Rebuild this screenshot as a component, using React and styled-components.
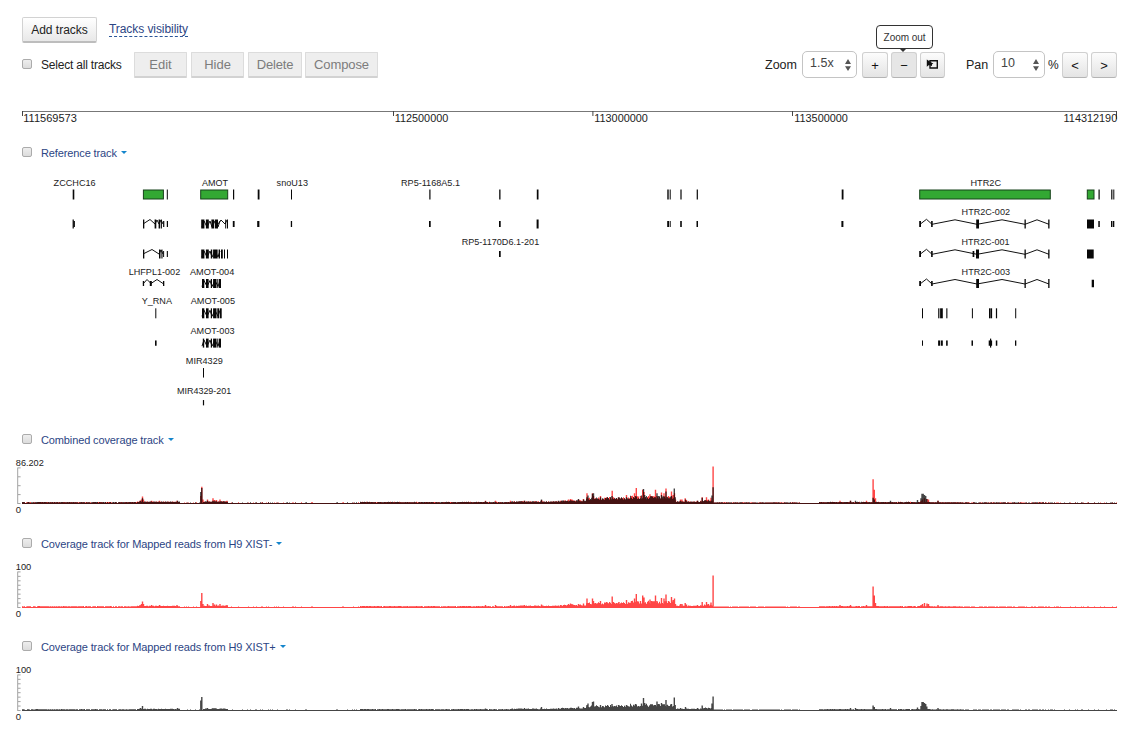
import React from "react";
import styled, { createGlobalStyle, css } from "styled-components";

const GlobalStyle = createGlobalStyle`
  body { margin: 0; background: #fff; overflow: hidden; }
  * { box-sizing: border-box; }
`;

const Page = styled.main`
  width: 1134px;
  height: 736px;
  display: flex;
  flex-direction: column;
  overflow: hidden;
  font-family: "Liberation Sans", Arial, sans-serif;
  font-size: 12px;
  color: #222;
`;

const Toolbar = styled.header`
  height: 100px;
  flex: none;
  padding: 17px 17px 0 22px;
  display: flex;
  justify-content: space-between;
`;

const Left = styled.div`
  display: flex;
  flex-direction: column;
  gap: 9px;
`;

const Row = styled.div`
  display: flex;
  align-items: center;
  height: 26px;
  white-space: nowrap;
`;

const Right = styled(Row)`
  margin-top: 34px;
  height: 27px;
`;

const Button = styled.button`
  width: ${(p) => p.$w}px;
  height: 26px;
  padding: 0;
  margin-right: ${(p) => p.$gap ?? 4}px;
  font: ${(p) => p.$size ?? 13}px "Liberation Sans", Arial, sans-serif;
  letter-spacing: ${(p) => p.$ls ?? 0}px;
  white-space: nowrap;
  color: #222;
  border: 1px solid #d2d2d2;
  border-bottom: 2px solid #bdbdbd;
  border-radius: 2px;
  background: linear-gradient(#fff, #e8e8e8);
  ${(p) => p.disabled && css`
    color: #7c7c7c;
    background: #eee;
    border: 1px solid #dcdcdc;
    border-bottom: 2px solid #d2d2d2;
    border-radius: 1px;
  `}
`;

const SquareButton = styled(Button)`
  position: relative;
  display: flex;
  align-items: center;
  justify-content: center;
  padding: 1px 0 0;
  color: #111;
  border-color: #d0d0d0;
  border-bottom: 1px solid #b4b4b4;
  border-radius: 3px;
  background: ${(p) => (p.$active ? "#e6e6e6" : "linear-gradient(#fcfcfc, #e4e4e4)")};
`;

const Link = styled.a`
  margin-left: 8px;
  height: 15px;
  margin-top: -1px;
  line-height: 14px;
  color: #2c4584;
  letter-spacing: -0.07px;
  border-bottom: 1px dashed #2a5599;
`;

const Check = styled.input`
  appearance: none;
  width: 10px;
  height: 10px;
  margin: 0 9px 2px 0;
  flex: none;
  border: 1px solid #ababab;
  border-radius: 2px;
  background: linear-gradient(#eee, #dcdcdc);
`;

const Text = styled.span`
  width: ${(p) => p.$w}px;
  font-size: ${(p) => p.$size ?? 12}px;
  letter-spacing: ${(p) => p.$ls ?? 0}px;
`;

const Select = styled.div`
  width: ${(p) => p.$w}px;
  height: 27px;
  margin-right: ${(p) => p.$gap}px;
  padding: 0 5px 0 7px;
  display: flex;
  align-items: center;
  justify-content: space-between;
  font-size: 12.5px;
  line-height: 1;
  color: #444;
  border: 1px solid #c4c4c4;
  border-radius: 5px;
`;

const Value = styled.span`
  margin-top: -3px;
`;

const Tooltip = styled.div`
  position: absolute;
  left: -16px;
  top: -28px;
  width: 57px;
  height: 24px;
  display: flex;
  align-items: center;
  justify-content: center;
  padding-top: 1px;
  font-size: 10px;
  letter-spacing: -0.05px;
  color: #333;
  background: #fff;
  border: 1px solid #333;
  border-radius: 4px;
  &::after {
    content: "";
    position: absolute;
    top: 22px;
    left: 22px;
    border: 4px solid transparent;
    border-top-color: #333;
    border-bottom: 0;
  }
`;

const TrackHeader = styled.div`
  display: flex;
  align-items: center;
  flex: none;
  height: 26px;
  margin-top: ${(p) => p.$top ?? 0}px;
  padding-left: 22px;
  font-size: 11px;
  color: #2c4584;
  letter-spacing: -0.12px;
`;

const Caret = styled.i`
  margin: -2px 0 0 4px;
  border: 3px solid transparent;
  border-top-color: #1485cc;
  border-bottom: 0;
`;

const Chart = styled.svg`
  display: block;
  flex: none;
  font-family: "Liberation Sans", Arial, sans-serif;
`;

const Canvas = ({ top, height, children }) => (
  <Chart width="1134" height={height} viewBox={`0 ${top} 1134 ${height}`}>{children}</Chart>
);

const Arrows = () => (
  <svg width="6" height="12" viewBox="0 0 6 12"><path d="M0 5 3 0 6 5zM0 7.2H6L3 12z" fill="#555" /></svg>
);

const SelectRegionIcon = () => (
  <svg width="13" height="12" viewBox="0 0 13 12">
    <path d="M4 1.8h7.3v7.2H4z" fill="none" stroke="#111" strokeWidth="1.4" />
    <path d="M.8.4v7.4L3 6l3 .9V5.2l1.4-.5z" fill="#111" />
  </svg>
);

const Label = ({ x, y, w, children, size = 9, fill = "#222" }) => (
  <text x={x} y={y} fontSize={size} textLength={w} lengthAdjust="spacingAndGlyphs" fill={fill}>{children}</text>
);

/* Coordinate ruler */
const Ruler = () => (
  <Canvas top={100} height={40}>
    <path d="M22 111.5H1117" stroke="#777" fill="none" />
    <path d="M22.5 111v5M393.5 111v5M592.9 111v5M792.5 111v5M1116.5 111v8" stroke="#444" fill="none" />
    {[[23.3, "111569573"], [394.7, "112500000"], [594.3, "113000000"], [794.3, "113500000"], [1063.6, "114312190"]].map(([x, t]) => (
      <Label key={t} x={x} y={122} w={53.6} size={10.7}>{t}</Label>
    ))}
  </Canvas>
);

/* Gene labels: x, baseline, width, name */
const geneLabels = [
  [53.6, 185.5, 42, "ZCCHC16"], [202, 185.5, 26, "AMOT"], [276.6, 185.5, 31.4, "snoU13"],
  [401, 185.5, 59, "RP5-1168A5.1"], [970.5, 185.5, 30.5, "HTR2C"], [961.6, 215.2, 48.4, "HTR2C-002"],
  [461.7, 244.8, 77.5, "RP5-1170D6.1-201"], [961.6, 244.8, 48, "HTR2C-001"],
  [128.7, 274.6, 51.5, "LHFPL1-002"], [190, 274.6, 44.3, "AMOT-004"], [961.6, 274.6, 48.4, "HTR2C-003"],
  [141.7, 304.3, 30.3, "Y_RNA"], [190.7, 304.3, 44.3, "AMOT-005"], [190.5, 334, 44, "AMOT-003"],
  [185.8, 363.8, 37, "MIR4329"], [177, 393.6, 54.3, "MIR4329-201"],
];

const genes = [[143.4, 20], [200.7, 27], [919.7, 130.6], [1087.3, 6.7]];

/* Marks: vertical centre, height, then [x, width] pairs */
const marks = [
  [194.5, 10, [[72.7, 1.6], [166.8, 1], [233, 1.2], [257.7, 1.8], [291, 1], [429.3, 1.2], [499.2, 1.3], [536.8, 1.7], [667.3, 1.4], [669.7, 1], [680.4, 1.2], [696.7, 1.2], [841.7, 1.8], [1098.5, 1.2], [1111.2, 1.2], [1113.3, 1]]],
  [224, 6, [[73.4, 1.5], [166.8, 1.2], [232.8, 1.8], [257.2, 2.2], [290.8, 1.3], [429, 1.7], [499, 1.7], [667.2, 1.8], [669.7, 1], [680.2, 1.6], [696.5, 1.5], [841.4, 2], [1098.3, 1.5], [1111, 1.3], [1112.8, 1.5], [163.1, 1.2], [919.2, 1.8], [931.1, 1.6]]],
  [224, 9, [[72.6, 1.2], [536.6, 2], [143, 1.3], [154.6, 1.7], [158.6, 1.4], [160.7, 1.2], [201.2, 3.2], [205.9, 2.9], [211.4, 2.8], [215, 3], [225.2, 1], [227, 1], [976.2, 2.8], [1024.5, 1.3], [1048.2, 1.3], [1087, 7]]],
  [254, 6, [[163.1, 1], [166.8, 1.1], [499, 1.7], [919.2, 1.8], [931.1, 1.6], [972.6, 1.7]]],
  [254, 9, [[143, 1.3], [159, 1.5], [161.4, 1.1], [201.2, 3.2], [205.9, 2.9], [210.8, 1.4], [213.1, 4.5], [218.6, 1.4], [221, 1.8], [224, 1], [227, 1], [976, 3], [1024.5, 1.3], [1048.2, 1.3], [1087, 6.7]]],
  [283.5, 5, [[142.8, 1.3], [149.8, 2], [163, 1.3], [919.2, 1.8], [931.1, 1.6]]],
  [283.5, 9, [[202, 2.3], [206, 2.6], [210.8, 1.2], [213.1, 3.4], [217.3, 1], [219, 2], [976.2, 2.8], [1024.5, 1.3], [1048.2, 1.3]]],
  [283.5, 7.5, [[1091.7, 2.3]]],
  [313.3, 10, [[155.3, 1], [202, 2.3], [206, 2.6], [210.8, 1.2], [213.1, 3.4], [217.3, 2], [220, 1.7], [922, 1], [938.2, 1.2], [940.1, 2.7], [946.3, 1.1], [971.9, 1], [989, 1], [990.3, 1.8], [995.9, 1.2], [1015.2, 1]]],
  [343.1, 5.3, [[155, 1.6], [922, 1], [938.1, 2], [940.8, 2], [946.1, 1.6], [971.5, 1.5], [988.7, 3.4], [995.8, 1.5], [1015, 1.3]]],
  [343.1, 9, [[202.8, 1.4], [206, 2.6], [210.8, 1.2], [213.1, 3.4], [217.3, 1], [219, 2], [990, 1.2]]],
  [372.8, 9.5, [[203, 1]]],
  [402.7, 5.3, [[202.9, 1.2]]],
];

const receptorIntrons = (y) => `M920 ${y}L926.5 ${y - 5}L932 ${y}L955 ${y - 4.5}L977 ${y}L1002 ${y - 4.5}L1025 ${y}L1037 ${y - 4.5}L1049 ${y}`;
const amotIntrons = (y) => `M202 ${y + 3}l2-6 3 6 3-6 2 6 3-6 3 6 2-6`;

const ReferenceTrack = () => (
  <Canvas top={166} height={248}>
    {geneLabels.map(([x, y, w, t]) => <Label key={t} x={x} y={y} w={w}>{t}</Label>)}
    {genes.map(([x, w]) => <rect key={x} x={x} y="190" width={w} height="9" fill="#33a833" stroke="#17421b" />)}
    <g stroke="#111" strokeWidth="1" fill="none">
      {[224.3, 254.3, 284].map((y) => <path key={y} d={receptorIntrons(y)} />)}
      {[224, 254, 283.5, 313.3, 343.1].map((y) => <path key={y} d={amotIntrons(y)} />)}
      <path d="M143 224l7-4.5 5 4.5 2-4 2 4 2-4 2 4M143 254l9-4.5 7 4.5 2-4 2 4M143 284l4-4.5 4 4 6-4 6 4M218 224l3-4 4 4 2-4" />
    </g>
    {marks.map(([c, h, items], i) => items.map(([x, w]) => (
      <rect key={`${i}-${x}`} x={x} y={c - h / 2} width={w} height={h} fill="#080808" />
    )))}
  </Canvas>
);

/* Peaks of each sample as [x, height] on the 0-100 scale (32px) */
const minusPeaks = [
  [139.5, 2], [141, 3], [142, 5.5], [143, 3], [151, 2], [159, 2], [176.5, 2], [200.3, 6], [201.3, 14], [202.5, 3],
  [207, 3], [212.5, 4], [214, 2.5], [216, 2.5], [219.5, 3], [226.5, 2], [485, 2], [495, 2], [510, 2], [524, 2], [541, 2.5],
  [560, 2], [565, 2], [568, 3], [570, 3.5], [571.5, 3], [578, 3], [583, 3.5],
  [586.5, 8.5], [588, 4], [592, 8.5], [593, 6], [600, 6], [606, 5], [611.7, 10.5], [613, 5], [618.5, 5], [626, 7],
  [631, 6], [634, 8.5], [635.8, 13], [640, 6], [642.2, 11.5], [643.5, 9.5], [649.5, 7.5], [651, 6], [655, 11.5], [656.5, 6],
  [661, 9], [663.5, 8.5], [665.5, 12.5], [668, 6], [671, 10], [672.7, 7], [674, 8.5], [675, 3], [680, 3], [681.5, 3],
  [684.7, 4], [686, 2.5], [697, 2], [701.7, 5], [706, 5], [708, 3], [710.5, 4.5], [712.6, 31.5],
  [839.5, 2], [850, 2], [866, 2], [872.6, 20.5], [873.8, 11.5], [875, 4], [920.5, 2], [922, 3], [924, 4], [926.5, 3.5], [928, 3], [937.5, 2],
];
const plusPeaks = [
  [140, 2], [142, 4], [177, 2], [200.3, 9.5], [201.3, 13], [207, 2], [212.5, 2], [214.5, 2], [485, 1.5], [524, 2], [541, 3],
  [558, 2], [565, 2], [578, 3.5], [583, 3], [586.5, 5], [587.5, 6.5], [592, 8], [593, 8.5], [596, 4], [600, 5], [606, 4],
  [611.5, 6], [614, 4], [618, 5], [626, 5], [630, 4], [635, 6], [638, 4], [641, 6.5], [643, 12], [644.2, 7],
  [650, 5], [654, 5], [656.5, 8.5], [658, 6], [661, 7], [665.5, 10], [667, 5], [671, 6], [673.8, 12.5], [674.7, 5],
  [680, 2], [685, 3], [697, 2], [701.7, 4.5], [706, 2], [709, 2], [711.5, 6.5], [712.6, 13.5],
  [850, 2], [855, 2], [872.6, 4.5], [873.8, 3], [890, 2], [917, 2.5], [920.5, 4], [921.5, 8], [922.7, 8],
  [924, 7], [925.2, 6], [926.3, 3.5], [937.5, 2],
];

/* Background read depth: from, to, floor, spread, fraction of covered positions */
const depth = [
  [22, 137, 0.5, 0.4, 0.9], [137, 180, 0.8, 0.5, 1], [184, 200, 0.4, 0.2, 0.3], [203, 228, 0.9, 0.6, 1], [228, 360, 0.4, 0.2, 0.3],
  [360, 510, 0.6, 0.4, 0.95], [510, 560, 0.8, 0.8, 1], [560, 586, 1.2, 1.2, 1], [586, 604, 2.6, 2.1, 1],
  [604, 630, 2.8, 2.6, 1], [630, 675, 3.2, 3.2, 1], [675, 700, 0.8, 0.8, 1], [700, 713, 1.3, 1.2, 1], [713, 800, 0.4, 0.2, 0.85],
  [819, 930, 0.6, 0.4, 0.95], [930, 962, 0.5, 0.2, 1], [962, 1050, 0.4, 0.2, 0.6], [1050, 1117, 0.4, 0.1, 0.3],
];
const noise = (n) => {
  const v = Math.sin(n * 12.9898) * 43758.5453;
  return v - Math.floor(v);
};

const buildPath = (peaks, base, scale, seed) => {
  let d = `M22 ${base}H1117v1H22z`;
  depth.forEach(([from, to, floor, spread, fill]) => {
    for (let x = from; x < to; x += 1) {
      if (noise(x + seed) < fill) {
        const h = ((floor + spread * noise(x * 3 + seed)) * scale).toFixed(2);
        d += `M${x} ${base}v-${h}h1v${h}z`;
      }
    }
  });
  peaks.forEach(([x, height]) => {
    const h = (height * scale).toFixed(2);
    d += `M${x - 0.2} ${base}v-${h}h1.4v${h}z`;
  });
  return d;
};

const Coverage = ({ top, base, max, step, minus, plus }) => {
  const scale = minus && plus ? 1.16 : 1;
  const ticks = [];
  for (let y = base + 0.5; y > base - 37; y -= step) ticks.push(`M18 ${y}h2.6`);
  return (
    <Canvas top={top} height={74}>
      <path d={`M17.7 ${base - 35.5}V${base + 1}${ticks.join("")}`} stroke="#999" fill="none" strokeWidth=".9" />
      {minus && <path d={buildPath(minusPeaks, base, scale, 5)} fill="#f00" fillOpacity=".73" />}
      {plus && <path d={buildPath(plusPeaks, base, scale, 11)} fill="#000" fillOpacity=".73" />}
      <Label x={15.8} y={base - 37} w={max.length > 3 ? 28 : 15.5}>{max}</Label>
      <Label x={15.8} y={base + 9.7} w={5.3}>0</Label>
    </Canvas>
  );
};

const Track = ({ name, top, children }) => (
  <>
    <TrackHeader $top={top}><Check type="checkbox" />{name}<Caret /></TrackHeader>
    {children}
  </>
);

export default function App() {
  return (
    <Page>
      <GlobalStyle />
      <Toolbar>
        <Left>
          <Row>
            <Button $w={75} $size={12}>Add tracks</Button>
            <Link>Tracks visibility</Link>
          </Row>
          <Row>
            <Check type="checkbox" />
            <Text $w={93} $ls={-0.2}>Select all tracks</Text>
            <Button disabled $w={53}>Edit</Button>
            <Button disabled $w={53}>Hide</Button>
            <Button disabled $w={54} $gap={3} $ls={-0.15}>Delete</Button>
            <Button disabled $w={73} $ls={-0.1}>Compose</Button>
          </Row>
        </Left>
        <Right>
          <Text $w={37} $size={12.5}>Zoom</Text>
          <Select $w={55} $gap={5}><Value>1.5x</Value><Arrows /></Select>
          <SquareButton $w={26} $gap={3}>+</SquareButton>
          <SquareButton $w={26} $gap={3} $active>−<Tooltip>Zoom out</Tooltip></SquareButton>
          <SquareButton $w={25} $gap={21}><SelectRegionIcon /></SquareButton>
          <Text $w={27} $size={12.5}>Pan</Text>
          <Select $w={52} $gap={3}><Value>10</Value><Arrows /></Select>
          <Text $w={14}>%</Text>
          <SquareButton $w={26} $gap={3}>&lt;</SquareButton>
          <SquareButton $w={26} $gap={0}>&gt;</SquareButton>
        </Right>
      </Toolbar>
      <Ruler />
      <Track name="Reference track"><ReferenceTrack /></Track>
      <Track name="Combined coverage track" top={13}>
        <Coverage top={453} base={503} max="86.202" step={8.9} minus plus />
      </Track>
      <Track name="Coverage track for Mapped reads from H9 XIST-" top={4}>
        <Coverage top={557} base={607} max="100" step={4.45} minus />
      </Track>
      <Track name="Coverage track for Mapped reads from H9 XIST+" top={3}>
        <Coverage top={660} base={710} max="100" step={4.45} plus />
      </Track>
    </Page>
  );
}
